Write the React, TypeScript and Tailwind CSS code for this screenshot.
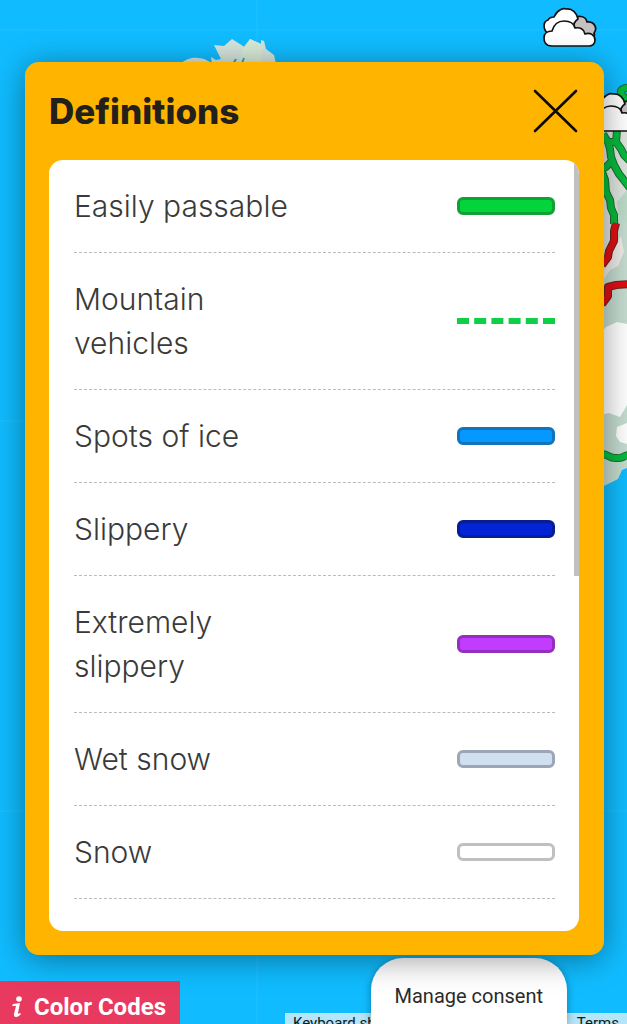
import React from "react";

type Definition = {
    label: string;
    // Fill and outline of the swatch. Rows without one get the dashed line.
    swatch: string | null;
};

const definitions: Definition[] = [
    { label: "Easily passable", swatch: "bg-[#04d43c] border-[#10a034]" },
    { label: "Mountain vehicles", swatch: null },
    { label: "Spots of ice", swatch: "bg-[#0598ff] border-[#1373b8]" },
    { label: "Slippery", swatch: "bg-[#0224d6] border-[#061d94]" },
    { label: "Extremely slippery", swatch: "bg-[#c23cff] border-[#922fbd]" },
    { label: "Wet snow", swatch: "bg-[#d0e0f0] border-[#9ba6b6]" },
    { label: "Snow", swatch: "bg-white border-[#c0c0c0]" },
];

function Cloud({ x, y }: { x: number; y: number }) {
    return (
        <g
            transform={`translate(${x} ${y})`}
            stroke="#111"
            strokeWidth="1.7"
            strokeLinejoin="round"
        >
            <path
                d="M30 22V12C34 6 43 8 44 14C51 13 55 20 51 25C52 27 51 29 50 30L38 30Z"
                fill="#c6c0c0"
            />
            <path
                d="M7 26C0 24-1 14 5 12C6 10 9 9 11 9C14 2 20 0 23 1C29 0 34 5 35 11C32 13 30 16 31 20L31 26Z"
                fill="#fff"
            />
            <path
                d="M9 38C2 38 1 33 1 30C1 25 5 23 9 23C11 16 16 13 21 13C27 13 31 16 32 20C37 19 41 21 42 26C47 24 52 27 52 32C52 36 49 38 46 38Z"
                fill="#fff"
            />
        </g>
    );
}

function RoadMap() {
    return (
        <svg
            className="absolute inset-0 h-full w-full"
            viewBox="0 0 627 1024"
            preserveAspectRatio="xMaxYMin slice"
            aria-hidden="true"
        >
            <rect width="627" height="1024" fill="#10bcff" />
            <path
                d="M0 30H627M0 421H627M0 811H627M257 0V1024"
                stroke="#20c0ff"
                strokeWidth="1"
            />

            {/* Northern peninsula */}
            <path
                d="M180 64C185 60 191 57 198 58C204 58 209 61 212 64L211 57L216 60L221 59L214 45L224 46L232 39L243 46L248 49L250 39L261 44L261 40L264 41L266 49L274 55L276 64Z"
                fill="#d5e4dc"
            />
            <path d="M250 39L261 44L262 62L239 63L243 48Z" fill="#d9ead7" />
            <path
                d="M233 64L236 59M242 63L244 58"
                stroke="#27a8cf"
                strokeWidth="2"
            />

            {/* Mainland */}
            <path
                d="M590 115H627V468L622 470L618 479L604 486L590 490Z"
                fill="#c5dcd0"
            />
            <path
                d="M604 120H627V207L619 213L616 234L618 248L614 262L604 272Z"
                fill="#dfe5de"
            />
            <path d="M627 190L617 202L618 215L627 224Z" fill="#bddbc8" />
            <path
                d="M627 226L621 236L624 252L618 266L610 270L604 279V262L615 246Z"
                fill="#ecebe6"
            />
            <path
                d="M600 334L606 327L617 322L627 324V405L620 417L609 413L600 415Z"
                fill="#fff"
            />
            <path
                d="M627 423L617 427L616 436L620 442L627 444Z"
                fill="#fff"
            />

            {/* Roads, drawn twice for the dark outline */}
            {[
                { width: 8, green: "#216b35", red: "#6b2525" },
                { width: 6, green: "#06ba3d", red: "#df1013" },
            ].map(({ width, green, red }) => (
                <g
                    key={width}
                    fill="none"
                    strokeWidth={width}
                    strokeLinejoin="round"
                >
                    <path
                        d="M603 134L608 142L610 149L611 157L614 165L619 174L623 179L630 188M617 130L616 142L621 149L624 155L630 161M608 142L616 142M611 162L606 167L602 169M602 172L605 180L606 192L610 200L611 208L614 215L614 224M630 88C624 87 620 90 621 93C622 96 626 98 626 102"
                        stroke={green}
                    />
                    <path
                        d="M602 454C609 454 609 459 617 458C622 459 624 455 630 455"
                        stroke={green}
                    />
                    <path
                        d="M616 223L614 231L614 241L609 251L608 257L602 265M630 284L616 285L608 287L608 296L602 304"
                        stroke={red}
                    />
                </g>
            ))}

            <Cloud x={543} y={8} />
            <Cloud x={590} y={93} />
        </svg>
    );
}

function Swatch({ swatch }: { swatch: string | null }) {
    if (swatch === null) {
        return (
            <svg className="h-[6px] w-[98px] shrink-0" aria-hidden="true">
                <path
                    d="M0 3H98"
                    stroke="#0ecf46"
                    strokeWidth="6"
                    strokeDasharray="12 5.2"
                />
            </svg>
        );
    }

    return (
        <span
            className={`h-[18px] w-[98px] shrink-0 rounded-[6px] border-[3px] ${swatch}`}
        />
    );
}

export default function App() {
    return (
        <div className="relative flex h-screen flex-col overflow-hidden bg-[#10bcff] font-[Inter,sans-serif]">
            <RoadMap />

            {/* Definitions dialog */}
            <section
                role="dialog"
                aria-labelledby="definitions-title"
                className="relative z-10 mt-[62px] mr-[23px] ml-[25px] flex min-h-0 flex-1 flex-col rounded-[14px] bg-[#ffb400] pr-[25px] pb-6 pl-6 shadow-[0_4px_32px_rgba(0,0,0,0.4)]"
            >
                <header className="flex h-[98px] shrink-0 items-center justify-between">
                    <h1
                        id="definitions-title"
                        className="text-[35px] leading-10 font-extrabold text-[#221f1c]"
                    >
                        Definitions
                    </h1>
                    <button type="button" aria-label="Close">
                        <svg
                            className="size-12"
                            viewBox="0 0 48 48"
                            fill="none"
                            stroke="#0d0a05"
                            strokeWidth="2.6"
                            strokeLinecap="round"
                        >
                            <path d="M4 4L45 44M45 4L4 44" />
                        </svg>
                    </button>
                </header>

                <div className="relative min-h-0 flex-1 overflow-hidden rounded-[14px] bg-white">
                    <ul className="h-full overflow-hidden pr-6 pl-[25px]">
                        {definitions.map(({ label, swatch }) => (
                            <li
                                key={label}
                                className="flex items-center justify-between border-b border-dashed border-[#bbb] py-6"
                            >
                                <span className="w-1/2 text-[30px] leading-[44px] font-light text-[#3a3a3a]">
                                    {label}
                                </span>
                                <Swatch swatch={swatch} />
                            </li>
                        ))}
                    </ul>
                    {/* Scrollbar thumb */}
                    <div className="absolute top-0 right-0 h-[54%] w-[5px] bg-[#c1c1c1]" />
                </div>
            </section>

            {/* Bottom bar */}
            <footer className="relative flex h-[69px] shrink-0 items-end justify-between font-[Roboto,sans-serif]">
                <button
                    type="button"
                    className="flex h-[43px] items-center gap-3 bg-[#e83a5e] pt-2 pr-3.5 pl-3 text-2xl font-bold text-white"
                >
                    <svg
                        className="h-[22px] w-[10px]"
                        viewBox="0 0 10 22"
                        fill="#fff"
                        aria-hidden="true"
                    >
                        <circle cx="7" cy="3" r="2.8" />
                        <path d="M1 8L8 7L6 17C6 18 7 18 8 17L9 18C6 22 1 22 2 18L4 10L0 10Z" />
                    </svg>
                    Color Codes
                </button>

                <div className="flex h-[11px] w-[342px] justify-between overflow-hidden bg-[#b4e5f9] px-2 text-[15px] leading-5 text-[#101a20]">
                    <button type="button" className="h-5">
                        Keyboard shortcuts
                    </button>
                    <a href="#terms" className="h-5">
                        Terms
                    </a>
                </div>

                <button
                    type="button"
                    className="absolute right-[60px] bottom-0 h-[66px] rounded-t-[32px] bg-white px-6 pt-2.5 text-xl text-[#2b2b2b] shadow-[0_2px_8px_rgba(0,0,0,0.35)]"
                >
                    Manage consent
                </button>
            </footer>
        </div>
    );
}
